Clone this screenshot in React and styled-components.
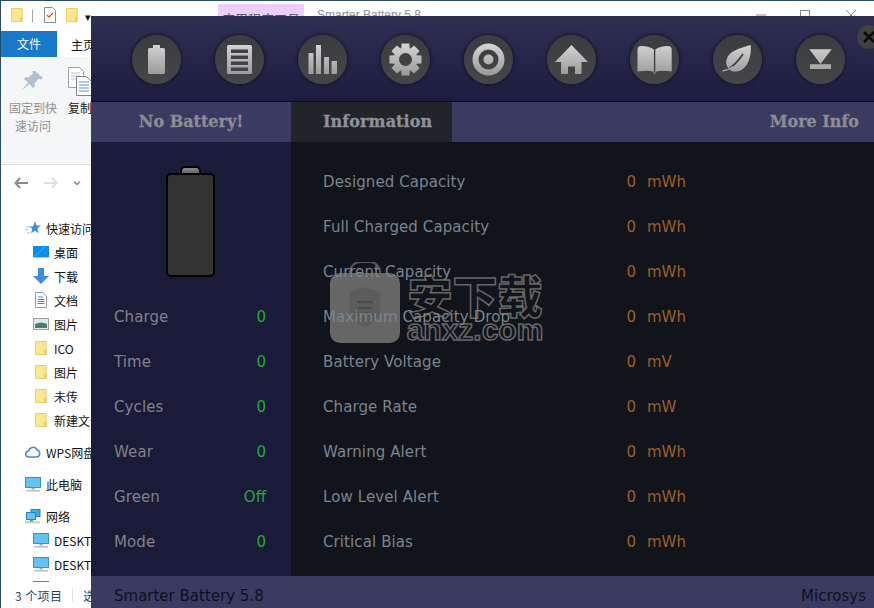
import React from 'react';
import styled, { createGlobalStyle } from 'styled-components';

const GlobalStyle = createGlobalStyle`
  html, body {
    margin: 0;
    padding: 0;
    background: #fff;
    overflow: hidden;
  }
  * {
    box-sizing: border-box;
  }
`;

const leftRows = [
  ['Charge', '0'],
  ['Time', '0'],
  ['Cycles', '0'],
  ['Wear', '0'],
  ['Green', 'Off'],
  ['Mode', '0'],
];

const infoRows = [
  ['Designed Capacity', 'mWh'],
  ['Full Charged Capacity', 'mWh'],
  ['Current Capacity', 'mWh'],
  ['Maximum Capacity Drop', 'mWh'],
  ['Battery Voltage', 'mV'],
  ['Charge Rate', 'mW'],
  ['Warning Alert', 'mWh'],
  ['Low Level Alert', 'mWh'],
  ['Critical Bias', 'mWh'],
];

const treeRows = [
  { text: '快速访问', icon: 'star', indent: 24 },
  { text: '桌面', icon: 'desktop', indent: 32 },
  { text: '下载', icon: 'down', indent: 32 },
  { text: '文档', icon: 'doc', indent: 32 },
  { text: '图片', icon: 'pic', indent: 32 },
  { text: 'ICO', icon: 'folder', indent: 32 },
  { text: '图片', icon: 'folder', indent: 32 },
  { text: '未传', icon: 'folder', indent: 32 },
  { text: '新建文件夹', icon: 'folder', indent: 32 },
  { text: 'WPS网盘', icon: 'cloud', indent: 24, gap: true },
  { text: '此电脑', icon: 'pc', indent: 24, gap: true },
  { text: '网络', icon: 'net', indent: 24, gap: true },
  { text: 'DESKTOP', icon: 'pc', indent: 32 },
  { text: 'DESKTOP', icon: 'pc', indent: 32 },
  { text: 'DESKTOP', icon: 'pc', indent: 32 },
];

function gearPath() {
  const cx = 24.5;
  const cy = 24.5;
  const points = [];
  for (let i = 0; i < 8; i += 1) {
    const a = (i * Math.PI) / 4 - Math.PI / 2;
    const spread = [
      [-0.36, 12],
      [-0.24, 16.5],
      [0.24, 16.5],
      [0.36, 12],
    ];
    spread.forEach(([d, r]) => {
      points.push(`${(cx + Math.cos(a + d) * r).toFixed(2)} ${(cy + Math.sin(a + d) * r).toFixed(2)}`);
    });
  }
  return `M${points.join('L')}Z M31 24.5a6.5 6.5 0 1 0 -13 0a6.5 6.5 0 1 0 13 0Z`;
}

const toolIcons = [
  <path key="b" d="M21 10h7v3h3.500a1.500 1.500 0 0 1 1.500 1.500v23a1.500 1.500 0 0 1 -1.500 1.500h-14a1.500 1.500 0 0 1 -1.500 -1.500v-23a1.500 1.500 0 0 1 1.500 -1.500h3.500Z" />,
  <path
    key="l"
    fillRule="evenodd"
    d="M13.500 10h22a1.500 1.500 0 0 1 1.500 1.500v26a1.500 1.500 0 0 1 -1.500 1.500h-22a1.500 1.500 0 0 1 -1.500 -1.500v-26a1.500 1.500 0 0 1 1.500 -1.500ZM16 14.500v3.500h17v-3.500ZM16 20.500v3.500h17v-3.500ZM16 26.500v3.500h17v-3.500ZM16 32.500v3.500h17v-3.500Z"
  />,
  <path key="c" d="M10.500 18h5v21h-5ZM18 10h5v29h-5ZM26 22h5v17h-5ZM33.500 26h5.500v13h-5.500Z" />,
  <path key="g" fillRule="evenodd" d={gearPath()} />,
  <path
    key="t"
    fillRule="evenodd"
    d="M40.500 24.500a16 16 0 1 0 -32 0a16 16 0 1 0 32 0ZM34.500 24.500a10 10 0 1 1 -20 0a10 10 0 1 1 20 0ZM29.500 24.500a5 5 0 1 0 -10 0a5 5 0 1 0 10 0Z"
  />,
  <path key="h" d="M24.500 10L41 27h-6.500v12h-6.500v-7.500h-7v7.500h-7v-12h-6Z" />,
  <path key="k" d="M7.500 14.500q0 -3.500 4 -3.500q8 0 12.400 3.500v22.700q-3 -2.700 -16.400 -.7ZM41.700 14.500q0 -3.500 -4 -3.500q-8 0 -12.400 3.500v22.700q3 -2.700 16.400 -.7ZM23 37.500h3l-1.500 1.500Z" />,
  <g key="f">
    <path d="M37.700 10C28 13 16 15 13.500 25C12.500 29 14 32 16 34C18 36 20 36.800 23 36.500C34 36 39 22 37.700 10Z" />
    <path d="M30 19C26 25 22 30 16 33.500" fill="none" stroke="#3f4143" strokeWidth="1.800" />
    <path d="M20 31.500C16.500 34.500 13 35.500 9.700 36" fill="none" stroke="#a8a8a8" strokeWidth="1.300" />
  </g>,
  <path key="d" d="M13.300 14.300h22.400L24.500 29ZM14 29.300h7.500l3 0h10.500v4.700h-21Z" />,
];

function ToolIcon({ index, children }) {
  const gradId = `tool-grad-${index}`;
  return (
    <svg width="49" height="49" viewBox="0 0 49 49">
      <defs>
        <linearGradient id={gradId} gradientUnits="userSpaceOnUse" x1="0" y1="10" x2="0" y2="39">
          <stop offset="0" stopColor="#d2d2d2" />
          <stop offset="1" stopColor="#9c9c9c" />
        </linearGradient>
      </defs>
      <g fill={`url(#${gradId})`}>{children}</g>
    </svg>
  );
}

function FolderIcon({ width = 14, height = 16 }) {
  return (
    <svg width={width} height={height} viewBox="0 0 14 16">
      <path d="M.5 .5h12.500v15h-12.500Z" fill="#fde891" stroke="#e8c650" />
      <path d="M11 11h2v4.500h-2Z" fill="#f6d76c" stroke="#e8c650" strokeWidth=".7" />
    </svg>
  );
}

function TreeIcon({ type }) {
  if (type === 'folder') return <FolderIcon width={12} height={16} />;
  if (type === 'star') {
    return (
      <svg width="16" height="14" viewBox="0 0 16 14">
        <path d="M10 0l1.500 4.500h4.500l-3.600 2.900 1.300 5-3.700-2.900-4 2.900 1.200-4.700-3-2.200h3.800Z" fill="#3b8fe0" />
        <path d="M1 6h4M0 9h3M2 12h3" stroke="#8cc3f2" strokeWidth="1" />
      </svg>
    );
  }
  if (type === 'desktop') {
    return (
      <svg width="16" height="12" viewBox="0 0 16 12">
        <rect width="16" height="12" fill="#0f8cec" />
        <path d="M0 11h16v1H0Z" fill="#9ed2f7" />
        <path d="M2 10L12 1" stroke="#3fb0f5" strokeWidth="1" />
      </svg>
    );
  }
  if (type === 'down') {
    return (
      <svg width="16" height="16" viewBox="0 0 16 16">
        <path d="M5 0h6v8h5l-8 8-8-8h5Z" fill="#3a8ee0" />
      </svg>
    );
  }
  if (type === 'doc') {
    return (
      <svg width="12" height="16" viewBox="0 0 12 16">
        <path d="M.5 .5h7.500l3.500 3.500v11.500h-11Z" fill="#fff" stroke="#9a9a9a" />
        <path d="M3 5h5M2.500 7.500h7M2.500 9.500h7M2.500 11.500h7" stroke="#2f8ad8" />
      </svg>
    );
  }
  if (type === 'pic') {
    return (
      <svg width="16" height="12" viewBox="0 0 16 12">
        <rect x=".5" y=".5" width="15" height="11" fill="#dfe9f2" stroke="#9c9c9c" />
        <path d="M2 6q6 -3 12 0v4H2Z" fill="#4f7f6c" />
      </svg>
    );
  }
  if (type === 'cloud') {
    return (
      <svg width="16" height="12" viewBox="0 0 16 12">
        <path d="M4 11a3 3 0 0 1 -.5 -6a4.500 4.500 0 0 1 8.500 -1a3.600 3.600 0 0 1 0 7Z" fill="#fff" stroke="#3f86e6" strokeWidth="1.500" />
      </svg>
    );
  }
  if (type === 'net') {
    return (
      <svg width="16" height="15" viewBox="0 0 16 15">
        <rect x="6" y=".5" width="9" height="7" fill="#3fa9ec" stroke="#2b7fbe" />
        <rect x="1.500" y="3.500" width="9" height="7" fill="#62c1f5" stroke="#2b7fbe" />
        <path d="M0 12h15v2.500H0Z" fill="#cfd3d6" />
        <path d="M5 10.500h3v2H5Z" fill="#39b54a" />
      </svg>
    );
  }
  return (
    <svg width="16" height="15" viewBox="0 0 16 15">
      <rect x=".5" y=".5" width="15" height="10" fill="#62c1f5" stroke="#3d8fc7" />
      <path d="M6.500 11h3v1.500h-3Z" fill="#9aa4ab" />
      <path d="M1 13h14v1.500H1Z" fill="#b5bcc2" />
    </svg>
  );
}

export default function App() {
  return (
    <Desktop>
      <GlobalStyle />
      <Explorer>
        <TitleBar>
          <QuickIcon><FolderIcon width={12} height={16} /></QuickIcon>
          <TitleSep />
          <QuickIcon $left={11}>
            <svg width="12" height="16" viewBox="0 0 12 16">
              <path d="M.5 .5h8l3 3v12h-11Z" fill="#fff" stroke="#8a8a8a" />
              <path d="M3 8l2 2 4-4" fill="none" stroke="#d9542b" strokeWidth="1.300" />
            </svg>
          </QuickIcon>
          <QuickIcon $left={10}><FolderIcon width={12} height={16} /></QuickIcon>
          <Caret>▾</Caret>
          <ContextTab>应用程序工具</ContextTab>
          <WinTitle>Smarter Battery 5.8</WinTitle>
          <WinButtons>
            <WinButton $left={0}>
              <svg width="10" height="2"><path d="M0 1h10" stroke="#888" /></svg>
            </WinButton>
            <WinButton $left={34}>
              <svg width="10" height="10"><rect x=".5" y=".5" width="9" height="9" fill="none" stroke="#888" /></svg>
            </WinButton>
            <WinButton $left={36}>
              <svg width="10" height="10"><path d="M0 0l10 10M10 0L0 10" stroke="#888" /></svg>
            </WinButton>
          </WinButtons>
        </TitleBar>
        <TabRow>
          <FileTab>文件</FileTab>
          <HomeTab>主页</HomeTab>
        </TabRow>
        <Ribbon>
          <RibbonTool>
            <svg width="22" height="22" viewBox="0 0 22 22">
              <path d="M13 1l8 7-2 1.500-2.500-.5-4 4.500.5 3-2 1.500-3.500-4-6 5-.5-.5 5-6-4-3.500 1.500-2 3 .5 4.500-4-.5-2.500Z" fill="#b3bfd2" />
            </svg>
            <RibbonLabel>固定到快<br />速访问</RibbonLabel>
          </RibbonTool>
          <CopyTool>
            <svg width="24" height="29" viewBox="0 0 24 29">
              <path d="M.5 .5h11l4 4v16h-15Z" fill="#fff" stroke="#9aa0a6" />
              <path d="M3 6h9M3 9h9M3 12h9" stroke="#a9c4e8" />
              <path d="M8.500 9.500h10l5 5v14h-15Z" fill="#fff" stroke="#7d848b" />
              <path d="M11 15h10M11 18h10M11 21h10M11 24h10" stroke="#5c8fd8" />
            </svg>
            <CopyLabel>复制</CopyLabel>
          </CopyTool>
        </Ribbon>
        <NavBar>
          <svg width="14" height="12" viewBox="0 0 14 12">
            <path d="M6 1L1.500 6 6 11M2 6h12" fill="none" stroke="#8a8a8a" strokeWidth="2" />
          </svg>
          <NavForward width="14" height="12" viewBox="0 0 14 12">
            <path d="M8 1l4.500 5L8 11M12 6H0" fill="none" stroke="#dedede" strokeWidth="2" />
          </NavForward>
          <NavChevron width="8" height="5" viewBox="0 0 8 5">
            <path d="M1 .5l3 3 3-3" fill="none" stroke="#888" strokeWidth="1.500" />
          </NavChevron>
        </NavBar>
        <Tree>
          {treeRows.map((row, i) => (
            <TreeRow key={`${row.text}-${i}`} $indent={row.indent} $gap={row.gap}>
              <TreeIconSlot><TreeIcon type={row.icon} /></TreeIconSlot>
              <span>{row.text}</span>
            </TreeRow>
          ))}
        </Tree>
        <StatusBar>
          <StatusCount>3 个项目</StatusCount>
          <StatusSep />
          <span>选</span>
        </StatusBar>
      </Explorer>

      <AppWindow>
        <Toolbar>
          {toolIcons.map((icon, i) => (
            <ToolButton key={icon.key} type="button">
              <ToolIcon index={i}>{icon}</ToolIcon>
            </ToolButton>
          ))}
        </Toolbar>
        <CloseButton type="button">
          <svg width="14" height="14" viewBox="0 0 14 14">
            <path d="M2 2l10 10M12 2L2 12" stroke="#0c0c0c" strokeWidth="2.600" />
          </svg>
        </CloseButton>
        <Tabs>
          <StatusTab>No Battery!</StatusTab>
          <ActiveTab>Information</ActiveTab>
          <MoreTab>More Info</MoreTab>
        </Tabs>
        <Main>
          <SidePanel>
            <Battery>
              <BatteryCap />
              <BatteryBody />
            </Battery>
            {leftRows.map(([label, value]) => (
              <SideRow key={label}>
                <RowLabel>{label}</RowLabel>
                <SideValue>{value}</SideValue>
              </SideRow>
            ))}
          </SidePanel>
          <InfoPanel>
            {infoRows.map(([label, unit]) => (
              <InfoRow key={label}>
                <InfoLabel>{label}</InfoLabel>
                <InfoValue>0</InfoValue>
                <InfoUnit>{unit}</InfoUnit>
              </InfoRow>
            ))}
          </InfoPanel>
        </Main>
        <Footer>
          <span>Smarter Battery 5.8</span>
          <span>Microsys</span>
        </Footer>
        <Watermark>
          <svg width="72" height="82" viewBox="0 0 72 82">
            <path d="M21 14V10a10 10 0 0 1 10 -10h10a10 10 0 0 1 10 10v4" fill="none" stroke="#555" strokeWidth="2" />
            <rect x="1" y="11" width="70" height="70" rx="10" fill="#666" />
            <path d="M21 30l15-5 15 5v22q-5 9-15 14q-10-5-15-14Z" fill="#5c5c5c" />
            <path d="M28 40h16M29 46h14M31 52h10" stroke="#4c4c4c" strokeWidth="2.500" />
          </svg>
          <WatermarkText>
            <WatermarkCjk>安下载</WatermarkCjk>
            <WatermarkLatin>anxz.com</WatermarkLatin>
          </WatermarkText>
        </Watermark>
      </AppWindow>
    </Desktop>
  );
}

const Desktop = styled.div`
  position: relative;
  width: 874px;
  height: 608px;
  overflow: hidden;
  background: #fff;
`;

const Explorer = styled.div`
  display: flex;
  flex-direction: column;
  width: 100%;
  height: 100%;
  border-top: 1px solid #2b4a66;
  border-left: 1px solid #2b4a66;
  font-family: 'Noto Sans CJK SC', 'Liberation Sans', sans-serif;
  font-size: 12px;
  color: #111;
`;

const TitleBar = styled.div`
  display: flex;
  align-items: flex-start;
  height: 30px;
  padding: 6px 0 0 10px;
`;

const QuickIcon = styled.div`
  display: flex;
  margin-left: ${({ $left }) => $left || 0}px;
`;

const TitleSep = styled.div`
  width: 1px;
  height: 12px;
  margin: 3px 0 0 9px;
  background: #a0a0a0;
`;

const Caret = styled.div`
  width: 12px;
  margin: 3px 0 0 7px;
  font-size: 11px;
  line-height: 12px;
`;

const ContextTab = styled.div`
  width: 86px;
  height: 26px;
  margin: -3px 0 0 121px;
  padding-top: 5px;
  background: #ecccfb;
  color: #555;
  font-size: 13px;
  text-align: center;
`;

const WinTitle = styled.div`
  margin: 1px 0 0 13px;
  color: #8e8e8e;
  font-family: 'Liberation Sans', sans-serif;
  font-size: 12px;
`;

const WinButtons = styled.div`
  display: flex;
  margin: 3px 0 0 auto;
  padding-right: 18px;
`;

const WinButton = styled.div`
  display: flex;
  align-items: center;
  height: 10px;
  margin-left: ${({ $left }) => $left}px;
`;

const TabRow = styled.div`
  display: flex;
  height: 26px;
`;

const FileTab = styled.div`
  width: 56px;
  background: #1979ca;
  color: #fff;
  line-height: 26px;
  text-align: center;
`;

const HomeTab = styled.div`
  padding-left: 14px;
  line-height: 28px;
`;

const Ribbon = styled.div`
  display: flex;
  height: 108px;
  padding: 13px 0 0 8px;
  background: #f5f6f7;
  border-bottom: 1px solid #dadbdd;
`;

const RibbonTool = styled.div`
  display: flex;
  flex-direction: column;
  align-items: center;
  width: 48px;
  gap: 7px;
`;

const RibbonLabel = styled.div`
  color: #8f8f8f;
  line-height: 18px;
  text-align: center;
  white-space: nowrap;
`;

const CopyTool = styled(RibbonTool)`
  align-items: flex-start;
  width: 40px;
  margin: -3px 0 0 11px;
  gap: 3px;
`;

const CopyLabel = styled.div`
  color: #222;
  line-height: 18px;
`;

const NavBar = styled.div`
  display: flex;
  align-items: center;
  height: 36px;
  padding-left: 13px;
`;

const NavForward = styled.svg`
  margin-left: 16px;
`;

const NavChevron = styled.svg`
  margin-left: 15px;
`;

const Tree = styled.div`
  flex: 1;
  min-height: 0;
  overflow: hidden;
  padding-top: 15px;
`;

const TreeRow = styled.div`
  display: flex;
  align-items: center;
  height: 24px;
  margin-top: ${({ $gap }) => ($gap ? 8 : 0)}px;
  padding-left: ${({ $indent }) => $indent}px;
  white-space: nowrap;
`;

const TreeIconSlot = styled.div`
  display: flex;
  justify-content: center;
  width: 16px;
  margin-right: 5px;
`;

const StatusBar = styled.div`
  display: flex;
  align-items: center;
  flex-shrink: 0;
  height: 26px;
  padding-left: 14px;
  background: #fff;
  color: #2a3f70;
`;

const StatusCount = styled.span`
  letter-spacing: 0.4px;
`;

const StatusSep = styled.div`
  width: 1px;
  height: 14px;
  margin: 0 10px 0 10px;
  background: #e2e2e2;
`;

const AppWindow = styled.div`
  position: absolute;
  top: 16px;
  left: 91px;
  right: 0;
  bottom: 0;
  display: flex;
  flex-direction: column;
  font-family: 'DejaVu Sans', sans-serif;
  font-size: 15px;
`;

const Toolbar = styled.div`
  display: flex;
  gap: 34px;
  height: 86px;
  padding: 19px 0 0 41px;
  background: linear-gradient(#2f2f52, #1b1c3f);
  border-bottom: 1px solid #0b0c1c;
`;

const ToolButton = styled.button`
  flex: none;
  width: 49px;
  height: 49px;
  padding: 0;
  border: 0;
  border-radius: 50%;
  background: linear-gradient(#3a3c3f, #444648);
  box-shadow: 0 0 3px 1px #14152a;
  svg {
    display: block;
  }
`;

const CloseButton = styled.button`
  position: absolute;
  top: 9px;
  left: 766px;
  display: flex;
  align-items: center;
  justify-content: center;
  width: 24px;
  height: 24px;
  padding: 0;
  border: 0;
  border-radius: 50%;
  background: #3e4042;
`;

const Tabs = styled.div`
  display: flex;
  height: 40px;
  background: #393b60;
  font-family: 'DejaVu Serif', serif;
  font-size: 16px;
  font-weight: 700;
  line-height: 39px;
  color: #8b8c94;
  -webkit-text-stroke: 0.3px #8b8c94;
`;

const StatusTab = styled.div`
  width: 200px;
  text-align: center;
`;

const ActiveTab = styled.div`
  width: 161px;
  padding-left: 32px;
  background: #212428;
  color: #8f9299;
  letter-spacing: 0.1px;
`;

const MoreTab = styled.div`
  flex: 1;
  padding-right: 15px;
  text-align: right;
`;

const Main = styled.div`
  display: flex;
  flex: 1;
  min-height: 0;
`;

const SidePanel = styled.div`
  flex: none;
  width: 200px;
  padding: 24px 25px 0 23px;
  background: #191b38;
`;

const Battery = styled.div`
  display: flex;
  flex-direction: column;
  align-items: center;
  height: 111px;
  margin-bottom: 17px;
`;

const BatteryCap = styled.div`
  width: 21px;
  height: 8px;
  margin-bottom: -1px;
  border: 2px solid #000;
  border-bottom: 0;
  border-radius: 5px 5px 0 0;
  background: linear-gradient(#8a8a8a, #606060);
`;

const BatteryBody = styled.div`
  flex: 1;
  width: 49px;
  border: 2px solid #000;
  border-radius: 5px;
  background: #333;
`;

const SideRow = styled.div`
  display: flex;
  align-items: center;
  justify-content: space-between;
  height: 45px;
`;

const RowLabel = styled.span`
  color: #80818a;
  letter-spacing: 0.1px;
`;

const SideValue = styled.span`
  color: #2ba53c;
`;

const InfoPanel = styled.div`
  flex: 1;
  padding: 17px 0 0 32px;
  background: #11141a;
`;

const InfoRow = styled.div`
  display: flex;
  align-items: center;
  height: 45px;
`;

const InfoLabel = styled.span`
  position: relative;
  z-index: 1;
  width: 282px;
  color: #7a848e;
  letter-spacing: 0.1px;
  white-space: nowrap;
`;

const InfoValue = styled.span`
  width: 31px;
  color: #9c6029;
  text-align: right;
`;

const InfoUnit = styled.span`
  margin-left: 11px;
  color: #9c6029;
`;

const Footer = styled.div`
  display: flex;
  align-items: center;
  justify-content: space-between;
  flex: none;
  height: 32px;
  padding: 7px 8px 0 23px;
  background: #393b60;
  color: #0e1020;
`;

const Watermark = styled.div`
  position: absolute;
  top: 246px;
  left: 238px;
  display: flex;
  gap: 6px;
  pointer-events: none;
`;

const WatermarkText = styled.div`
  display: flex;
  flex-direction: column;
  align-items: center;
  width: 136px;
  padding-top: 10px;
  color: transparent;
  -webkit-text-stroke: 1.5px #666;
`;

const WatermarkCjk = styled.div`
  font-family: 'Noto Sans CJK SC', sans-serif;
  font-size: 45px;
  font-weight: 900;
  line-height: 46px;
`;

const WatermarkLatin = styled.div`
  font-family: 'Liberation Sans', sans-serif;
  font-size: 30px;
  font-weight: 700;
  line-height: 24px;
`;
